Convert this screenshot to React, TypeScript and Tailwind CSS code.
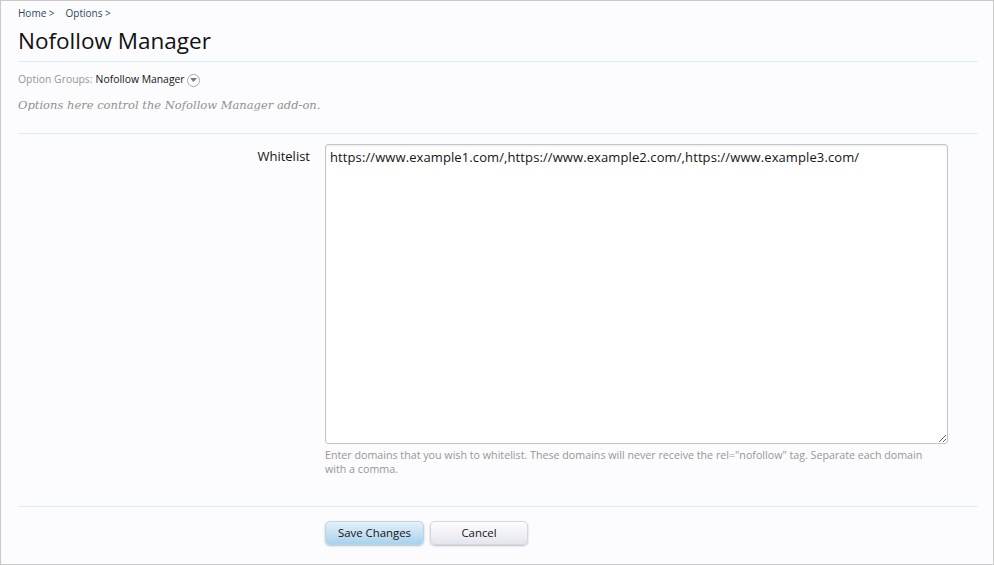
import * as React from 'react';

const sans = "font-['Open_Sans',sans-serif]";

function DropCircle() {
    return (
        <span className="ml-[2px] inline-flex h-[13px] w-[13px] items-center justify-center rounded-full border border-[#a8a8a8] bg-white align-middle">
            <svg width="7" height="4" viewBox="0 0 7 4">
                <path d="M0 0 L7 0 L3.5 4 Z" fill="#7a7a7a" />
            </svg>
        </span>
    );
}

export default function App() {
    const [value, setValue] = React.useState(
        'https://www.example1.com/,https://www.example2.com/,https://www.example3.com/'
    );

    return (
        <div className={`box-border h-[565px] w-[994px] border border-[#c9c9c9] bg-[#fcfcff] pl-[17px] pr-[15px] ${sans}`}>
            <div className="flex h-[24px] items-center gap-[11px] text-[10px] text-[#2b485c]">
                <span>Home &gt;</span>
                <span>Options &gt;</span>
            </div>

            <h1 className="h-[37px] border-b border-[#d7edfc] text-[22.5px] leading-[31px] text-[#111]">
                Nofollow Manager
            </h1>

            <div className="flex h-[34px] items-center pt-[2px] text-[10.4px]">
                <span className="text-[#969696]">Option Groups:</span>
                <span className="ml-[3px] text-[#141414]">Nofollow Manager</span>
                <DropCircle />
            </div>

            <p className="h-[38px] border-b border-[#d7edfc] pt-[1px] font-['DejaVu_Serif',serif] text-[11.5px] italic text-[#909090]">
                Options here control the Nofollow Manager add-on.
            </p>

            <div className="h-[373px] border-b border-[#d7edfc] pt-[10px]">
                <div className="flex gap-[15px]">
                    <label className="w-[292px] pt-[3px] text-right text-[13px] text-[#141414]">Whitelist</label>
                    <div className="w-[623px]">
                        <textarea
                            value={value}
                            onChange={(e) => setValue(e.target.value)}
                            className="box-border block h-[300px] w-[623px] resize-y rounded-[3px] border border-[#c4c4c4] bg-white px-[4px] pt-[3px] text-[13px] leading-[18px] tracking-[0.1px] text-[#141414] shadow-[inset_0_1px_2px_rgba(0,0,0,0.08)] outline-none"
                        />
                        <p className="mt-[4px] w-[608px] text-[10.7px] leading-[14px] text-[#969696]">
                            Enter domains that you wish to whitelist. These domains will never receive the rel="nofollow" tag. Separate each domain with a comma.
                        </p>
                    </div>
                </div>
            </div>

            <div className="flex gap-[6px] pl-[307px] pt-[14px]">
                <button className="h-[24px] w-[99px] rounded-[5px] border border-[#b9d5e6] bg-gradient-to-b from-[#e4f1fa] to-[#a9d2ec] text-[11.4px] text-[#141414] shadow-[0_1px_2px_rgba(0,0,0,0.25)]">
                    Save Changes
                </button>
                <button className="h-[24px] w-[98px] rounded-[5px] border border-[#d6d6e0] bg-gradient-to-b from-[#fdfdff] to-[#e5e5ee] text-[11.4px] text-[#141414] shadow-[0_1px_2px_rgba(0,0,0,0.25)]">
                    Cancel
                </button>
            </div>
        </div>
    );
}
